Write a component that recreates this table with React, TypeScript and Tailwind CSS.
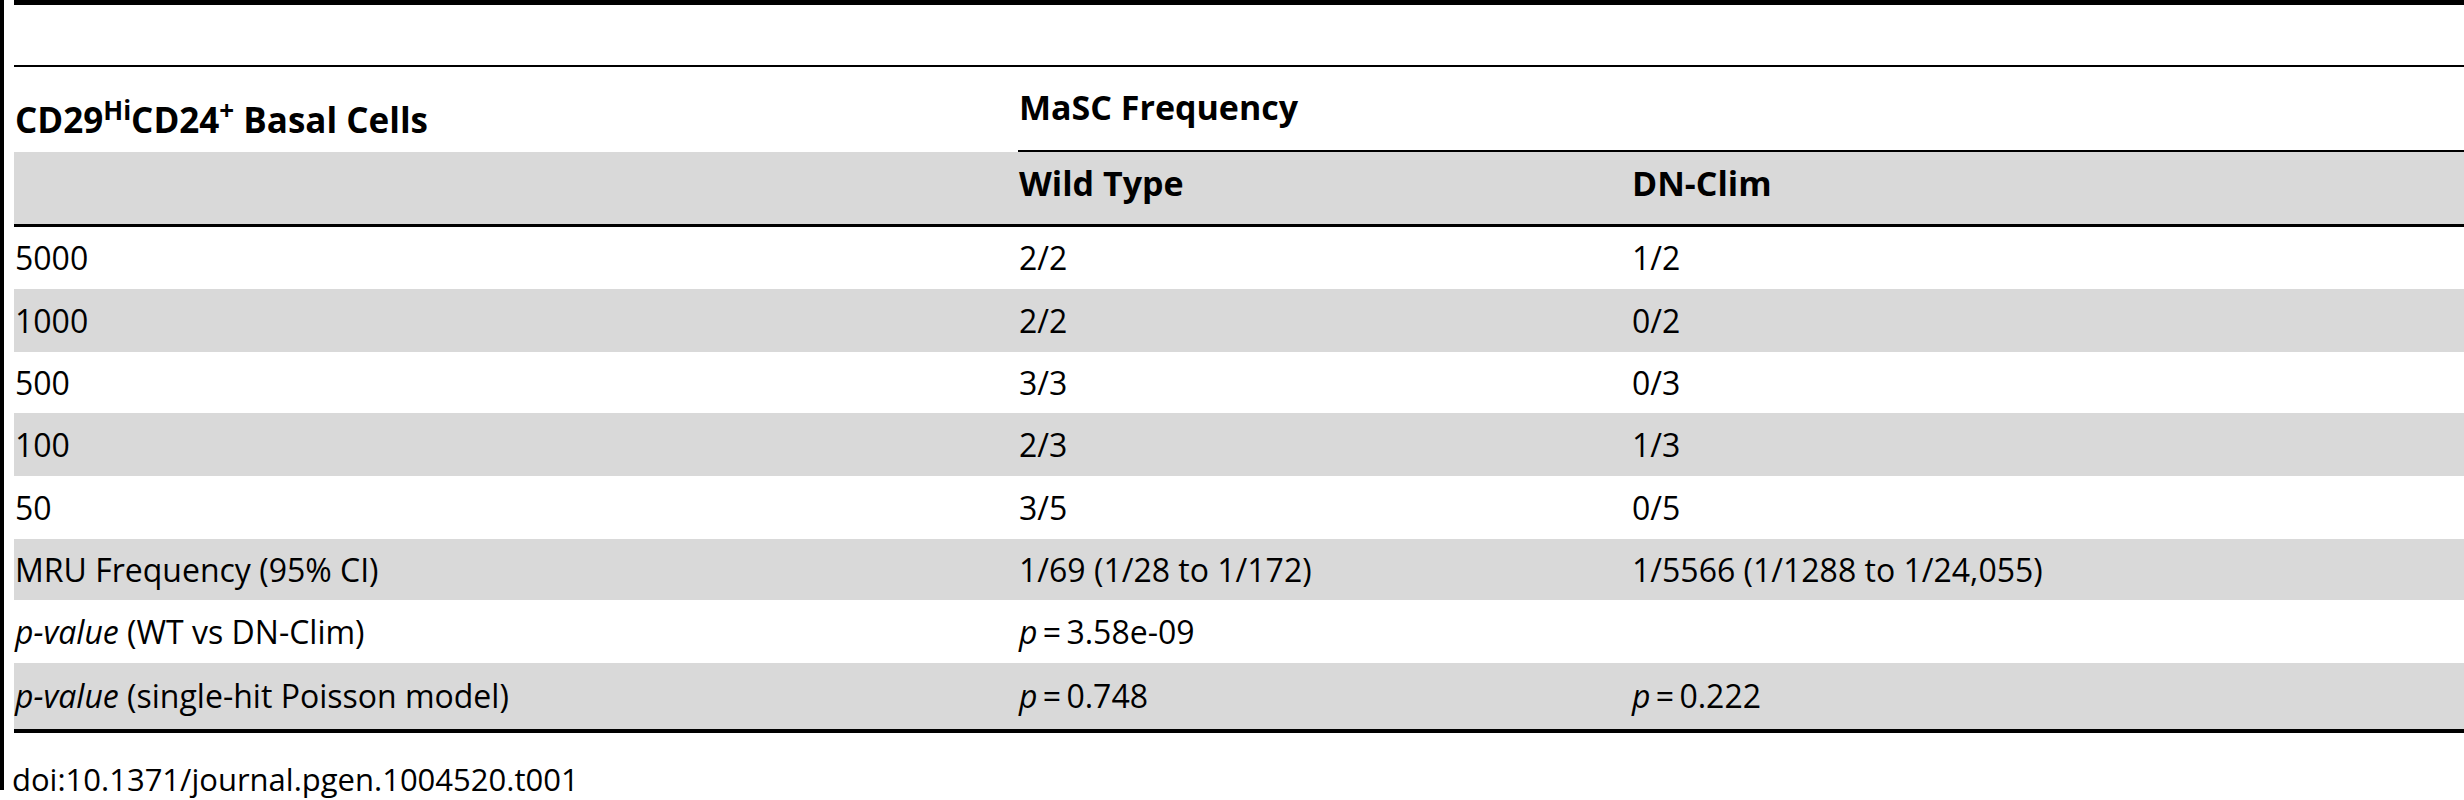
import type { ReactNode } from "react";

type Row = {
  cells: ReactNode[];
  gray: boolean;
  h: string;
};

const P = () => <i>p</i>;

const rows: Row[] = [
  { cells: ["5000", "2/2", "1/2"], gray: false, h: "h-[62px]" },
  { cells: ["1000", "2/2", "0/2"], gray: true, h: "h-[63px]" },
  { cells: ["500", "3/3", "0/3"], gray: false, h: "h-[61px]" },
  { cells: ["100", "2/3", "1/3"], gray: true, h: "h-[63px]" },
  { cells: ["50", "3/5", "0/5"], gray: false, h: "h-[63px]" },
  {
    cells: ["MRU Frequency (95% CI)", "1/69 (1/28 to 1/172)", "1/5566 (1/1288 to 1/24,055)"],
    gray: true,
    h: "h-[61px]",
  },
  {
    cells: [
      <>
        <i>p-value</i> (WT vs DN-Clim)
      </>,
      <>
        <P />
        {"\u2009=\u2009"}3.58e-09
      </>,
      "",
    ],
    gray: false,
    h: "h-[63px]",
  },
  {
    cells: [
      <>
        <i>p-value</i> (single-hit Poisson model)
      </>,
      <>
        <P />
        {"\u2009=\u2009"}0.748
      </>,
      <>
        <P />
        {"\u2009=\u2009"}0.222
      </>,
    ],
    gray: true,
    h: "h-[70px]",
  },
];

export default function App() {
  return (
    <div className="w-[2464px] h-[800px] overflow-hidden bg-white text-black font-['Open_Sans',sans-serif] text-[32px] leading-[40px]">
      <div className="border-l-4 border-black pl-[10px] h-[790px]">
        {/* table caption area */}
        <div className="h-[65px] border-t-[5px] border-black" />

        <table className="w-[2450px] table-fixed border-separate border-spacing-0">
          <colgroup>
            <col className="w-[1004px]" />
            <col className="w-[613px]" />
            <col />
          </colgroup>
          <thead className="text-[34px]">
            <tr className="h-[87px]">
              <th className="border-t-2 border-black text-left align-top pt-[33px] pl-px font-bold text-[35px]">
                CD29<sup className="text-[26px]">Hi</sup>CD24<sup className="text-[26px]">+</sup> Basal Cells
              </th>
              <th
                colSpan={2}
                className="border-t-2 border-b-2 border-black text-left align-middle pb-[3px] pl-px font-bold"
              >
                MaSC Frequency
              </th>
            </tr>
            <tr className="h-[75px] bg-[#d9d9d9]">
              <th className="border-b-[3px] border-black" />
              <th className="border-b-[3px] border-black text-left align-top pt-[11px] pl-px font-bold">
                Wild Type
              </th>
              <th className="border-b-[3px] border-black text-left align-top pt-[11px] pl-px font-bold">
                DN-Clim
              </th>
            </tr>
          </thead>
          <tbody>
            {rows.map((r, i) => {
              const last = i === rows.length - 1;
              return (
                <tr key={i} className={`${r.h} ${r.gray ? "bg-[#d9d9d9]" : ""}`}>
                  {r.cells.map((c, j) => (
                    <td
                      key={j}
                      className={`align-middle pl-px whitespace-nowrap ${last ? "border-b-4 border-black" : ""}`}
                    >
                      {c}
                    </td>
                  ))}
                </tr>
              );
            })}
          </tbody>
        </table>

        <div className="pt-[26px] -ml-[2px] text-[31px]">doi:10.1371/journal.pgen.1004520.t001</div>
      </div>
    </div>
  );
}
